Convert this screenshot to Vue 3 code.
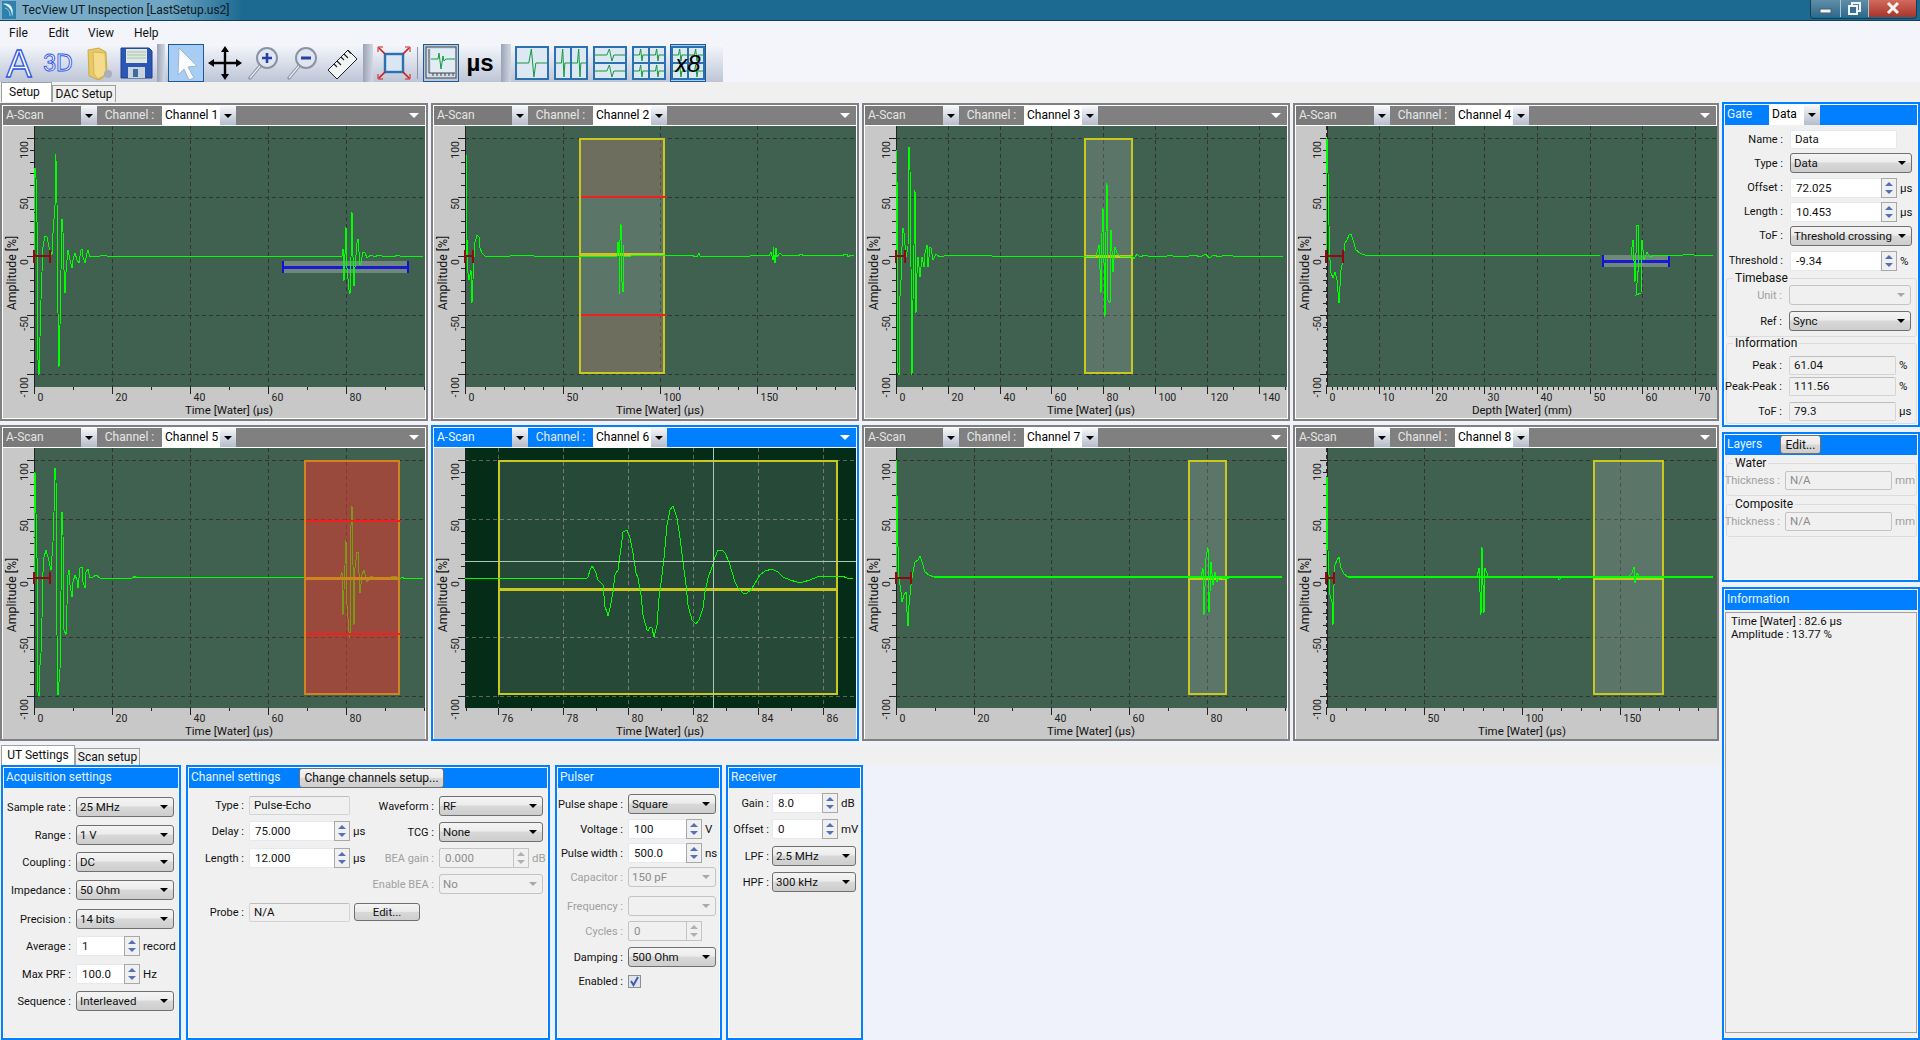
<template>
  <div class="app">
    <!-- Title bar -->
    <div class="titlebar">
      <div class="title-glow">
        <svg class="app-icon" width="14" height="18" viewBox="0 0 14 18">
          <path d="M1 3 C7 1 13 6 10 16 C10 9 7 5 1 3 Z" fill="#eaf6ff" />
          <path d="M3 7 C6 8 8 10 8 15" stroke="#8fd0f5" fill="none" />
        </svg>
        <span>TecView UT Inspection [LastSetup.us2]</span>
      </div>
      <div class="win-buttons">
        <span class="win-btn min"><svg width="29" height="17"><rect x="9" y="9" width="11" height="4" fill="#eef3f7" stroke="#44606f" /></svg></span>
        <span class="win-btn max"><svg width="27" height="17"><rect x="11" y="3" width="8" height="8" fill="none" stroke="#eef3f7" stroke-width="2" /><rect x="8" y="6" width="8" height="8" fill="#3c6f8c" stroke="#eef3f7" stroke-width="2" /></svg></span>
        <span class="win-btn close"><svg width="47" height="17"><path d="M19 3 L29 13 M29 3 L19 13" stroke="#f4f4f4" stroke-width="3" /></svg></span>
      </div>
    </div>

    <!-- Menu -->
    <div class="menubar">
      <span v-for="m in menus" :key="m" class="menu-item">{{ m }}</span>
    </div>

    <!-- Toolbar -->
    <div class="toolbar-row">
      <div class="toolbar">
        <span class="tool"><svg viewBox="0 0 36 38"><text x="18" y="33" text-anchor="middle" class="t-a">A</text></svg></span>
        <span class="tool"><svg viewBox="0 0 36 38"><text x="18" y="27" text-anchor="middle" class="t-3d">3D</text></svg></span>
        <span class="tool">
          <svg viewBox="0 0 36 38">
            <path d="M9 6 L20 4 L27 8 L28 31 L20 36 L10 32 Z" fill="#e8c964" stroke="#b69a3a" stroke-width="0.7" />
            <path d="M14 8 L26 9 L27 30 L19 35 L15 30 Z" fill="#f5dc8a" stroke="#c8a94a" stroke-width="0.7" />
            <ellipse cx="29" cy="30" rx="4" ry="4" fill="#a9afbb" />
          </svg>
        </span>
        <span class="tool">
          <svg viewBox="0 0 36 38">
            <path d="M3 4 H31 L34 7 V34 H3 Z" fill="#2b56b5" stroke="#1c3f8c" />
            <rect x="8" y="5" width="21" height="14" fill="#dfe9e2" />
            <path d="M9 8 H28 M9 11 H28 M9 14 H28" stroke="#a9c3ae" />
            <rect x="10" y="23" width="17" height="11" fill="#c9d4df" />
            <rect x="15" y="25" width="5" height="8" fill="#3e6c9e" />
          </svg>
        </span>
        <span class="tool-sep"></span>
        <span class="tool on">
          <svg viewBox="0 0 36 38">
            <path d="M11 4 L29 22 L20 23 L26 34 L21 36 L16 25 L10 31 Z" fill="#fbfcff" stroke="#9db4cc" />
          </svg>
        </span>
        <span class="tool">
          <svg viewBox="0 0 36 38">
            <path d="M18 5 V33 M4 19 H32" stroke="#000" stroke-width="2.4" />
            <path d="M18 2 L14 8 H22 Z M18 36 L14 30 H22 Z M1 19 L7 15 V23 Z M35 19 L29 15 V23 Z" fill="#000" />
          </svg>
        </span>
        <span class="tool">
          <svg viewBox="0 0 36 38">
            <circle cx="21" cy="14" r="10" fill="#dfe6f2" stroke="#8b93a3" stroke-width="2" />
            <path d="M14 22 L4 34" stroke="#8b93a3" stroke-width="3.4" stroke-linecap="round" />
            <path d="M14 22 L4 34" stroke="#eef0f4" stroke-width="1.2" />
            <path d="M21 9 V19 M16 14 H26" stroke="#2a3fa6" stroke-width="2.6" />
          </svg>
        </span>
        <span class="tool">
          <svg viewBox="0 0 36 38">
            <circle cx="21" cy="14" r="10" fill="#dfe6f2" stroke="#8b93a3" stroke-width="2" />
            <path d="M14 22 L4 34" stroke="#8b93a3" stroke-width="3.4" stroke-linecap="round" />
            <path d="M14 22 L4 34" stroke="#eef0f4" stroke-width="1.2" />
            <path d="M16 14 H26" stroke="#2a3fa6" stroke-width="3" />
          </svg>
        </span>
        <span class="tool">
          <svg viewBox="0 0 36 38">
            <path d="M4 26 L24 6 L33 15 L13 35 Z" fill="#f3f4f4" stroke="#222" />
            <path d="M10 20 L13 23 M13 17 L17 21 M17 13 L20 16 M20 10 L24 14 M24 6.5 L27 9.500" stroke="#222" stroke-width="1.2" />
          </svg>
        </span>
        <span class="tool-sep wide"></span>
        <span class="tool">
          <svg viewBox="0 0 36 38">
            <rect x="9" y="10" width="18" height="18" fill="#dbe6f3" stroke="#2b70b0" stroke-width="2.4" />
            <path d="M9 10 L3 4 M27 10 L33 4 M9 28 L3 34 M27 28 L33 34" stroke="#d01818" stroke-width="1.6" />
            <path d="M2 3 H7 M2 3 V8 M34 3 H29 M34 3 V8 M2 35 H7 M2 35 V30 M34 35 H29 M34 35 V30" stroke="#d01818" />
          </svg>
        </span>
        <span class="tool-line"></span>
        <span class="tool on dim">
          <svg viewBox="0 0 36 38">
            <rect x="3" y="3" width="30" height="31" fill="#cfdcec" stroke="#444" />
            <rect x="8" y="5" width="24" height="24" fill="#e2ecf5" />
            <path d="M8 15 H15 L16 9 L18 25 L20 12 L21 17 L23 15 H32" stroke="#149a3c" fill="none" />
            <path d="M6 5 V29 H32" stroke="#444" fill="none" />
            <path d="M10 29 V32 M14 29 V32 M18 29 V32 M22 29 V32 M26 29 V32 M30 29 V32" stroke="#444" />
          </svg>
        </span>
        <span class="tool"><svg viewBox="0 0 36 38"><text x="18" y="27" text-anchor="middle" class="t-us">µs</text></svg></span>
        <span class="tool-sep wide"></span>
        <span v-for="(lay, i) in layouts" :key="i" class="tool" :class="{ on: lay.x8 }">
          <svg viewBox="0 0 36 38">
            <template v-for="cell in lay.cells" :key="cell.key">
              <rect :x="cell.x" :y="cell.y" :width="cell.w" :height="cell.h" fill="#dce8f3" stroke="#2b70b0" stroke-width="2" />
              <path :d="cell.d" stroke="#149a3c" fill="none" />
            </template>
            <text v-if="lay.x8" x="18" y="28" text-anchor="middle" class="t-x8">x8</text>
          </svg>
        </span>
      </div>
    </div>

    <!-- Top tabs -->
    <div class="tabstrip top-tabs">
      <span class="tab active setup">Setup</span>
      <span class="tab dac">DAC Setup</span>
    </div>

    <div class="work">
      <div class="left">
        <!-- A-Scan views -->
        <div class="scopes">
          <div v-for="s in scopes" :key="s.n" class="scope" :class="{ active: s.active }">
            <div class="scope-head">
              <span class="sc-combo dark"><span class="sc-text">A-Scan</span><span class="sc-arrow"><i class="tri"></i></span></span>
              <span class="sc-label">Channel :</span>
              <span class="sc-combo light"><span class="sc-text">Channel {{ s.n }}</span><span class="sc-arrow"><i class="tri"></i></span></span>
              <i class="menu-tri"></i>
            </div>
            <svg class="chart" :width="422" :height="s.chartH">
              <rect width="422" :height="s.chartH" fill="#c8c8c8" />
              <rect x="31" y="0" width="391" :height="s.plotH" :fill="s.active ? '#042c17' : '#406050'" />

              <g shape-rendering="crispEdges" fill="none">
                <path :d="s.grid" :stroke="s.active ? '#5c665c' : '#333'" stroke-dasharray="4 3" />
                <path :d="s.ticks" stroke="#222" />
              </g>

              <!-- gate under the trace -->
              <g v-if="s.gate && !s.gate.over" shape-rendering="crispEdges" v-html="s.gate.svg"></g>
              <path v-if="s.base" :d="s.base" stroke="#00ff00" stroke-width="2" shape-rendering="crispEdges" />
              <polyline :points="s.points" fill="none" stroke="#00ff00" shape-rendering="crispEdges" />
              <g v-if="s.gate && s.gate.over" shape-rendering="crispEdges" v-html="s.gate.svg"></g>
              <g v-if="s.marker" shape-rendering="crispEdges">
                <path :d="s.marker" stroke="#8a0c0c" stroke-width="2" fill="none" />
              </g>
              <g v-if="s.cross" shape-rendering="crispEdges">
                <path :d="s.cross" stroke="#a9c9b2" fill="none" />
              </g>

              <text v-for="t in s.xLabels" :key="t.text" :x="t.x" :y="s.plotH + 14" class="ax">{{ t.text }}</text>
              <text v-for="t in yLabels" :key="t.text" class="ax" text-anchor="end" :transform="`translate(25 ${t.y}) rotate(-90)`">{{ t.text }}</text>
              <text x="226" :y="s.plotH + 27" text-anchor="middle" class="ax-title">{{ s.xTitle }}</text>
              <text class="ax-title y-title" text-anchor="middle" transform="translate(13 147) rotate(-90)">Amplitude [%]</text>
            </svg>
          </div>
        </div>

        <!-- Settings tabs -->
        <div class="tabstrip ut-tabs">
          <span class="tab active ut">UT Settings</span>
          <span class="tab scan">Scan setup</span>
        </div>

        <div class="bottom">
          <div v-for="p in bottomPanes" :key="p.key" class="pane" :class="p.key">
            <div class="pane-head">
              <span class="pane-title">{{ p.title }}</span>
              <button v-if="p.button" class="btn head-btn">{{ p.button }}</button>
            </div>
            <div class="pane-body cols">
              <div v-for="(sec, i) in p.sections" :key="i" class="section" :class="sec.cls">
                <div v-for="row in sec.rows" :key="row.label" class="row" :class="{ off: row.off }" :style="rowStyle(row)">
                  <span class="lbl">{{ row.label }} :</span>
                  <span v-if="row.type === 'combo'" class="combo"><span class="combo-text">{{ row.value }}</span><i class="tri"></i></span>
                  <span v-else-if="row.type === 'spin'" class="spin"><span class="spin-text">{{ row.value }}</span><span class="spin-btns"><i class="up"></i><i class="down"></i></span></span>
                  <span v-else-if="row.type === 'check'" class="check"><svg width="11" height="11" viewBox="0 0 11 11"><path d="M2 5 L4.500 9 L9 1" stroke="#3d5db0" stroke-width="2" fill="none" /></svg></span>
                  <span v-else class="edit" :class="row.type">{{ row.value }}</span>
                  <span v-if="row.suffix" class="suffix">{{ row.suffix }}</span>
                  <button v-if="row.button" class="btn row-btn">{{ row.button }}</button>
                </div>
              </div>
            </div>
          </div>
        </div>
      </div>

      <div class="right">
        <div v-for="p in sidePanes" :key="p.key" class="pane" :class="p.key">
          <div class="pane-head">
            <span class="pane-title">{{ p.title }}</span>
            <span v-if="p.combo" class="sc-combo light"><span class="sc-text">{{ p.combo }}</span><span class="sc-arrow"><i class="tri"></i></span></span>
            <button v-if="p.button" class="btn head-btn">{{ p.button }}</button>
          </div>
          <div class="pane-body">
            <div v-for="(sec, i) in p.sections" :key="i" class="section" :class="sec.cls">
              <span v-if="sec.legend" class="legend">{{ sec.legend }}</span>
              <div v-for="row in sec.rows" :key="row.label" class="row" :class="{ off: row.off }" :style="rowStyle(row)">
                <span class="lbl">{{ row.label }} :</span>
                <span v-if="row.type === 'combo'" class="combo"><span class="combo-text">{{ row.value }}</span><i class="tri"></i></span>
                <span v-else-if="row.type === 'spin'" class="spin"><span class="spin-text">{{ row.value }}</span><span class="spin-btns"><i class="up"></i><i class="down"></i></span></span>
                <span v-else class="edit" :class="row.type">{{ row.value }}</span>
                <span v-if="row.suffix" class="suffix">{{ row.suffix }}</span>
              </div>
            </div>
          </div>
        </div>

        <div class="pane info">
          <div class="pane-head"><span class="pane-title">Information</span></div>
          <div class="pane-body">
            <div class="info-box">
              <div>Time [Water] : 82.6 µs</div>
              <div>Amplitude : 13.77 %</div>
            </div>
          </div>
        </div>
      </div>
    </div>
  </div>
</template>

<script setup>
const menus = ['File', 'Edit', 'View', 'Help']

// toolbar layout icons
const miniTrace = (x, y, w, h) => {
  const m = y + h / 2
  return `M${x + 1} ${m} H${x + w * 0.4} L${x + w * 0.48} ${y + 2} L${x + w * 0.56} ${y + h - 2} L${x + w * 0.62} ${m} H${x + w - 1}`
}
const makeLayout = (cols, rows, x8 = false) => {
  const cells = []
  const w = 32 / cols
  const h = 32 / rows
  for (let r = 0; r < rows; r++) {
    for (let c = 0; c < cols; c++) {
      const x = 2 + c * w
      const y = 3 + r * h
      cells.push({ key: `${r}-${c}`, x, y, w, h, d: miniTrace(x, y, w, h) })
    }
  }
  return { cells, x8 }
}
const layouts = [makeLayout(1, 1), makeLayout(2, 1), makeLayout(1, 2), makeLayout(2, 2), makeLayout(2, 2, true)]

// form rows
const combo = (label, value, h, extra = {}) => ({ type: 'combo', label, value, h, ...extra })
const spin = (label, value, suffix, h, extra = {}) => ({ type: 'spin', label, value, suffix, h, ...extra })
const edit = (label, value, h, extra = {}) => ({ type: 'edit', label, value, h, ...extra })
const read = (label, value, suffix, h, extra = {}) => ({ type: 'read', label, value, suffix, h, ...extra })
const rowStyle = (row) => ({ height: row.h + 'px', marginTop: (row.top || 0) + 'px' })

const bottomPanes = [
  {
    key: 'acq',
    title: 'Acquisition settings',
    sections: [{
      rows: [
        combo('Sample rate', '25 MHz', 28),
        combo('Range', '1 V', 28),
        combo('Coupling', 'DC', 26),
        combo('Impedance', '50 Ohm', 30),
        combo('Precision', '14 bits', 28),
        spin('Average', '1', 'record', 26),
        spin('Max PRF', '100.0', 'Hz', 30),
        combo('Sequence', 'Interleaved', 24),
      ],
    }],
  },
  {
    key: 'chan',
    title: 'Channel settings',
    button: 'Change channels setup...',
    sections: [
      {
        cls: 'chan-left',
        rows: [
          read('Type', 'Pulse-Echo', '', 24),
          spin('Delay', '75.000', 'µs', 28),
          spin('Length', '12.000', 'µs', 26),
          read('Probe', 'N/A', '', 22, { top: 30, button: 'Edit...' }),
        ],
      },
      {
        cls: 'chan-right',
        rows: [
          combo('Waveform', 'RF', 26),
          combo('TCG', 'None', 26),
          spin('BEA gain', '0.000', 'dB', 26, { off: true }),
          combo('Enable BEA', 'No', 26, { off: true }),
        ],
      },
    ],
  },
  {
    key: 'pulser',
    title: 'Pulser',
    sections: [{
      rows: [
        combo('Pulse shape', 'Square', 22),
        spin('Voltage', '100', 'V', 28),
        spin('Pulse width', '500.0', 'ns', 20),
        combo('Capacitor', '150 pF', 28, { off: true }),
        combo('Frequency', '', 30, { off: true }),
        spin('Cycles', '0', '', 20, { off: true }),
        combo('Damping', '500 Ohm', 32),
        { type: 'check', label: 'Enabled', h: 16 },
      ],
    }],
  },
  {
    key: 'receiver',
    title: 'Receiver',
    sections: [{
      rows: [
        spin('Gain', '8.0', 'dB', 20),
        spin('Offset', '0', 'mV', 32),
        combo('LPF', '2.5 MHz', 22),
        combo('HPF', '300 kHz', 30),
      ],
    }],
  },
]

const sidePanes = [
  {
    key: 'gate',
    title: 'Gate',
    combo: 'Data',
    sections: [
      {
        rows: [
          edit('Name', 'Data', 24),
          combo('Type', 'Data', 24),
          spin('Offset', '72.025', 'µs', 25),
          spin('Length', '10.453', 'µs', 23),
          combo('ToF', 'Threshold crossing', 25),
          spin('Threshold', '-9.34', '%', 25),
        ],
      },
      {
        cls: 'group timebase',
        legend: 'Timebase',
        rows: [
          combo('Unit', '', 32, { off: true, top: 0 }),
          combo('Ref', 'Sync', 20),
        ],
      },
      {
        cls: 'group gate-info',
        legend: 'Information',
        rows: [
          read('Peak', '61.04', '%', 22),
          read('Peak-Peak', '111.56', '%', 20),
          read('ToF', '79.3', 'µs', 26, { top: 2 }),
        ],
      },
    ],
  },
  {
    key: 'layers',
    title: 'Layers',
    button: 'Edit...',
    sections: [
      { cls: 'group', legend: 'Water', rows: [read('Thickness', 'N/A', 'mm', 22, { off: true })] },
      { cls: 'group', legend: 'Composite', rows: [read('Thickness', 'N/A', 'mm', 22, { off: true })] },
    ],
  },
]

// A-Scan plots. Traces are measured off the screenshot crops, so x is in crop
// units (3 or 1.823 per pixel) and y is 3 per pixel.
const parse = (str) => str.trim().split(/\s+/).map((p) => p.split(',').map(Number))

const scopeDefs = [
  {
    n: 1, col: 0, row: 0, kx: 3, cropX: 0,
    x0: 103, step: 234, labels: [0, 20, 40, 60, 80], minor: 2, xTitle: 'Time [Water] (µs)',
    marker: [103, 150, 468, 450, 490],
    blue: { x1: 848, x2: 1225, y: 502, top: 484, bot: 520 },
    trace: `103,470 103,340 105,205 107,235 110,365 112,450 114,780 118,825 120,710 122,600 125,515 128,440 134,408 140,412 148,440 155,465
      160,400 164,315 166,162 169,180 171,310 174,640 177,800 180,675 182,510 185,358 188,395 191,510 195,580 198,515 201,480 205,450 210,480 215,503
      220,480 226,460 232,480 236,488 242,450 246,447 250,470 254,490 260,460 265,450 270,470 280,467 300,468 310,466 320,468 380,468 1025,468 1028,448
      1033,542 1038,380 1041,505 1047,570 1049,582 1052,470 1056,335 1059,470 1063,558 1066,500 1070,430 1074,418 1079,495 1084,490 1090,455 1095,460
      1102,475 1112,465 1125,470 1135,465 1145,468 1165,468 1180,472 1195,466 1205,472 1220,468 1245,468 1268,469`,
  },
  {
    n: 2, col: 1, row: 0, kx: 3, cropX: 430,
    x0: 106, step: 292, labels: [0, 50, 100, 150], minor: 5, xTitle: 'Time [Water] (µs)',
    marker: [106, 130, 468, 450, 488],
    box: { x1: 449, x2: 703, y1: 116, y2: 820, mid: 463, red: [290, 644], stroke: '#c8c820', band: 'rgba(255,255,255,.14)', outer: 'rgba(248,152,136,.25)' },
    trace: `107,468 109,165 110,315 111,420 113,520 116,540 120,525 122,510 125,610 128,540 131,470 134,425 138,418 142,405 146,410 150,445 155,460
      165,468 200,467 235,467 240,469 262,465 263,467 310,465 311,467 380,467 395,469 445,467 560,467 563,425 566,460 568,582 570,420 574,372 576,545
      578,575 580,435 583,470 590,468 597,470 610,466 780,465 800,470 806,460 810,467 960,467 970,464 1018,467 1024,455 1028,480 1030,440 1034,488
      1038,445 1042,470 1050,460 1058,468 1080,464 1100,468 1115,463 1120,467 1180,465 1230,467 1250,463 1255,470 1262,464 1272,467`,
  },
  {
    n: 3, col: 2, row: 0, kx: 1.823, cropX: 860,
    x0: 65, step: 94.7, labels: [0, 20, 40, 60, 80, 100, 120, 140], minor: 2, xTitle: 'Time [Water] (µs)',
    marker: [65, 82, 468, 450, 488],
    box: { x1: 411, x2: 496, y1: 116, y2: 820, mid: 468, stroke: '#c8c820', band: 'rgba(255,255,255,.14)' },
    trace: `65,468 66,150 67,245 68,560 69,820 71,825 72,640 75,540 77,440 79,385 81,400 84,470 87,440 89,140 91,210 93,500 95,825 97,600 100,270 102,640
      104,520 106,470 108,500 110,530 113,470 116,500 119,460 122,435 124,500 127,440 130,445 133,480 138,462 145,470 160,466 180,468 230,466 240,468
      430,468 436,435 439,580 441,400 443,325 446,650 448,395 450,250 452,600 455,610 458,390 461,515 464,440 468,460 475,470 495,468 500,476 505,462
      510,472 520,465 530,470 560,468 565,464 570,468 600,468 610,465 620,470 630,462 637,474 645,464 655,470 665,466 680,468 772,468`,
  },
  {
    n: 4, col: 3, row: 0, kx: 1.823, cropX: 860,
    x0: 850, step: 96, labels: [0, 10, 20, 30, 40, 50, 60, 70], minor: 10, xTitle: 'Depth [Water] (mm)',
    marker: [850, 880, 468, 450, 488],
    blue: { x1: 1355, x2: 1475, y: 484, top: 466, bot: 502 },
    trace: `850,470 851,115 853,220 855,375 857,480 859,520 862,535 866,515 870,540 873,610 876,510 880,480 884,430 888,420 892,405 896,403 900,430 905,450
      912,460 925,468 945,466 1175,464 1180,467 1350,466 1405,466 1409,420 1413,545 1416,375 1419,375 1421,480 1414,585 1423,578 1426,420 1430,480
      1434,455 1440,470 1450,466 1472,468 1480,464 1500,466 1515,462 1525,467 1555,466`,
  },
  {
    n: 5, col: 0, row: 1, kx: 3, cropX: 0,
    x0: 103, step: 234, labels: [0, 20, 40, 60, 80], minor: 2, xTitle: 'Time [Water] (µs)',
    marker: [103, 150, 460, 441, 478],
    box: { x1: 914, x2: 1197, y1: 107, y2: 807, mid: 460, red: [288, 627], stroke: '#d08420', band: 'rgba(255,47,40,.47)', over: true },
    trace: `103,460 103,340 106,140 108,265 110,400 112,790 116,812 118,760 122,685 125,580 128,440 132,395 138,376 145,395 152,435 160,350 163,262 166,130
      169,165 172,630 175,810 179,735 182,500 186,262 189,330 193,615 197,630 200,540 203,450 206,436 210,480 215,515 220,470 226,450 230,465 235,490
      240,430 245,425 250,470 254,490 258,440 264,432 270,458 280,455 288,450 300,458 330,458 395,460 400,457 1020,458 1025,440 1030,570 1037,345
      1040,540 1047,620 1049,638 1052,300 1056,243 1059,420 1063,600 1066,430 1070,380 1075,380 1080,505 1085,450 1092,435 1100,470 1112,452 1125,458
      1165,458 1185,452 1195,458 1200,462 1205,455 1215,462 1228,458 1240,460 1268,458`,
  },
  {
    n: 6, col: 1, row: 1, kx: 3, cropX: 430, active: true,
    x0: 205, step: 195, labels: [76, 78, 80, 82, 84, 86], minor: 2, xTitle: 'Time [Water] (µs)', tickFrom: 107,
    box: { x1: 206, x2: 1222, y1: 107, y2: 807, mid: 493, stroke: '#c8c820', band: 'rgba(255,255,255,.14)' },
    cross: { x: 850, y: 409 },
    trace: `106,458 110,458 175,458 470,458 475,456 480,435 487,424 492,432 497,445 505,465 515,478 520,480 525,545 530,562 535,572 540,550 548,500 555,450
      565,435 572,370 578,320 590,316 600,340 610,385 618,445 625,460 632,510 640,570 650,615 655,618 660,605 665,610 672,637 680,600 688,520 695,450
      703,400 712,300 720,255 730,243 740,280 750,340 760,410 768,480 775,540 785,585 797,598 807,585 818,550 825,500 835,460 845,425 855,395 865,376
      875,376 885,385 897,410 905,440 915,470 925,490 938,505 950,505 962,495 975,475 990,450 1005,437 1025,433 1045,440 1060,455 1080,465 1100,472
      1120,472 1140,465 1160,456 1180,452 1210,452 1235,454 1250,458 1268,463`,
  },
  {
    n: 7, col: 2, row: 1, kx: 1.823, cropX: 860, base: [135, 770, 456],
    x0: 65, step: 142, labels: [0, 20, 40, 60, 80], minor: 2, xTitle: 'Time [Water] (µs)',
    marker: [65, 93, 460, 441, 478],
    box: { x1: 600, x2: 667, y1: 107, y2: 807, mid: 460, stroke: '#c8c820', band: 'rgba(255,255,255,.14)' },
    trace: `65,458 66,105 67,210 69,365 71,460 74,500 77,530 80,510 83,500 85,560 87,602 90,540 93,480 97,440 100,410 105,405 109,393 113,410 118,440 125,450
      135,457 160,460 175,456 600,456 622,456 625,430 628,570 631,400 634,365 636,560 638,500 640,410 643,480 647,440 650,470 655,455 665,462 680,456 770,456`,
  },
  {
    n: 8, col: 3, row: 1, kx: 1.823, cropX: 860, base: [890, 1555, 456],
    x0: 850, step: 178.5, labels: [0, 50, 100, 150], minor: 5, xTitle: 'Time [Water] (µs)',
    marker: [850, 865, 460, 441, 478],
    box: { x1: 1338, x2: 1464, y1: 107, y2: 807, mid: 460, stroke: '#c8c820', band: 'rgba(255,255,255,.14)' },
    trace: `850,458 851,155 852,300 855,450 857,510 860,530 862,600 864,480 866,420 870,405 873,395 877,430 882,448 890,456 905,458 925,456 1125,456 1129,430
      1132,570 1134,365 1136,480 1138,565 1140,430 1144,452 1150,456 1260,456 1270,452 1275,465 1280,456 1400,456 1408,445 1411,425 1413,475 1416,445
      1420,452 1430,455 1555,456`,
  },
]

const yLabels = [
  { text: '100', y: 15 },
  { text: '50', y: 72 },
  { text: '0', y: 133 },
  { text: '-50', y: 190 },
  { text: '-100', y: 251 },
]

const buildScope = (def) => {
  const bodyX = def.col * 431 + 3
  const cropY = def.row ? -23 : -26
  const px = (zx) => Math.round(zx / def.kx + def.cropX - bodyX)
  const py = (zy) => Math.round(zy / 3 + cropY)
  const plotH = def.row ? 260 : 261
  const chartH = def.row ? 291 : 292

  // horizontal grid + y ticks
  let grid = ''
  let ticks = ''
  for (let pct = -100; pct <= 100; pct += 10) {
    const y = Math.round(130 - pct * 1.18) + 0.5
    const major = pct % 50 === 0
    ticks += `M${major ? 24 : 27} ${y} H31 `
    if (major && pct !== 0) grid += `M31 ${y} H420 `
  }

  // vertical grid + x ticks
  const minorStep = def.step / def.minor
  const xLabels = []
  def.labels.forEach((text, i) => {
    const x = px(def.x0 + i * def.step) + 0.5
    grid += `M${x} 0 V${plotH} `
    ticks += `M${x} ${plotH} V${plotH + 7} `
    xLabels.push({ text: String(text), x: x + 3 })
  })
  const start = def.tickFrom ?? def.x0
  for (let zx = start; px(zx) <= 421; zx += minorStep) {
    const x = px(zx) + 0.5
    ticks += `M${x} ${plotH} V${plotH + 3} `
  }
  ticks += `M31 0 V${plotH} `

  const scope = {
    n: def.n,
    active: def.active,
    chartH,
    plotH,
    xTitle: def.xTitle,
    grid,
    ticks,
    xLabels,
    points: parse(def.trace).map(([x, y]) => `${px(x)},${py(y)}`).join(' '),
  }

  if (def.base) {
    const [x1, x2, y] = def.base
    scope.base = `M${px(x1)} ${py(y)} H${px(x2)}`
  }

  if (def.marker) {
    const [x1, x2, y, top, bot] = def.marker
    scope.marker = `M${px(x1)} ${py(y)} H${px(x2)} M${px(x1)} ${py(top)} V${py(bot)} M${px(x2)} ${py(top)} V${py(bot)}`
  }

  if (def.cross) {
    scope.cross = `M${px(def.cross.x) + 0.5} 0 V${plotH} M31 ${py(def.cross.y) + 0.5} H422`
  }

  if (def.blue) {
    const b = def.blue
    const x1 = px(b.x1)
    const x2 = px(b.x2)
    scope.gate = {
      svg: `<rect x="${x1}" y="${py(b.top)}" width="${x2 - x1}" height="${py(b.bot) - py(b.top)}" fill="rgba(255,255,255,.25)"/>
        <path d="M${x1} ${py(b.y)} H${x2}" stroke="#1a1ad0" stroke-width="3"/>
        <path d="M${x1} ${py(b.top)} V${py(b.bot)} M${x2} ${py(b.top)} V${py(b.bot)}" stroke="#1010d8" stroke-width="2"/>`,
    }
  }

  if (def.box) {
    const b = def.box
    const x1 = px(b.x1)
    const x2 = px(b.x2)
    const y1 = py(b.y1)
    const y2 = py(b.y2)
    let svg = `<rect x="${x1}" y="${y1}" width="${x2 - x1}" height="${y2 - y1}" fill="${b.band}"/>`
    if (b.outer) {
      const [r1, r2] = b.red.map(py)
      svg = `<rect x="${x1}" y="${y1}" width="${x2 - x1}" height="${r1 - y1}" fill="${b.outer}"/>
        <rect x="${x1}" y="${r2}" width="${x2 - x1}" height="${y2 - r2}" fill="${b.outer}"/>
        <rect x="${x1}" y="${r1}" width="${x2 - x1}" height="${r2 - r1}" fill="${b.band}"/>`
    }
    svg += `<rect x="${x1}" y="${y1}" width="${x2 - x1}" height="${y2 - y1}" fill="none" stroke="${b.stroke}" stroke-width="2"/>`
    svg += `<path d="M${x1} ${py(b.mid)} H${x2}" stroke="${b.stroke}" stroke-width="3"/>`
    if (b.red) {
      b.red.forEach((r) => {
        svg += `<path d="M${x1 + 1} ${py(r)} H${x2 + 2}" stroke="#f02020" stroke-width="2"/>`
      })
    }
    scope.gate = { svg, over: b.over }
  }
  return scope
}

const scopes = scopeDefs.map(buildScope)
</script>

<style>
html,
body {
  margin: 0;
  background: #f0f0f0;
}
</style>

<style scoped>
.app {
  width: 1920px;
  height: 1040px;
  overflow: hidden;
  display: flex;
  flex-direction: column;
  font-family: Roboto, "Liberation Sans", sans-serif;
  font-size: 11px;
  color: #111;
  background: #eff2fb;
}

/* title bar */
.titlebar {
  height: 20px;
  flex: none;
  display: flex;
  justify-content: space-between;
  background: #1c6a92;
  border-bottom: 1px solid #0f3f5a;
}
.title-glow {
  width: 240px;
  display: flex;
  align-items: center;
  gap: 6px;
  padding-left: 2px;
  font-size: 12px;
  color: #0c1a22;
  background: linear-gradient(90deg, #7fb0cc 0, #6fa6c4 70%, #1c6a92 100%);
}
.app-icon {
  flex: none;
  background: #2e80ad;
}
.win-buttons {
  display: flex;
  margin-right: 3px;
  height: 18px;
  border: 1px solid #153f57;
  border-top: none;
  border-radius: 0 0 4px 4px;
  overflow: hidden;
}
.win-btn {
  display: block;
  height: 17px;
  line-height: 0;
}
.win-btn.min,
.win-btn.max {
  background: linear-gradient(#5f8ea8, #2f6a8a);
  border-right: 1px solid #a9c4d4;
}
.win-btn.close {
  background: linear-gradient(#d26a5e, #a8342a);
}

/* menu */
.menubar {
  height: 23px;
  flex: none;
  display: flex;
  align-items: center;
  background: #f3f5fb;
  font-size: 12px;
  padding-left: 9px;
}
.menu-item {
  width: 39.5px;
}
.menu-item:nth-child(3) {
  width: 46px;
}

/* toolbar */
.toolbar-row {
  height: 38px;
  flex: none;
  background: #f3f5fb;
}
.toolbar {
  width: 723px;
  height: 38px;
  display: flex;
  align-items: stretch;
  gap: 3px;
  padding-left: 1px;
  box-sizing: border-box;
  background: linear-gradient(#f5f7fc, #bdc5d6);
}
.tool {
  width: 36px;
  flex: none;
  box-sizing: border-box;
  line-height: 0;
}
.tool svg {
  width: 36px;
  height: 38px;
  overflow: visible;
}
.tool.on {
  background: #a8cdf5;
  outline: 1px solid #1d5a96;
  outline-offset: -1px;
}
.tool.on.dim {
  background: #b8c8dc;
}
.tool-sep {
  width: 8px;
  flex: none;
  background: linear-gradient(90deg, #9aa3b5, #d3d8e3);
}
.tool-sep.wide {
  width: 10px;
}
.tool-line {
  width: 1px;
  flex: none;
  margin: 3px 2px;
  background: #8d95a6;
}
.t-a {
  font: 38px "Liberation Sans", sans-serif;
  fill: #fff;
  stroke: #2c56e0;
  stroke-width: 1.3;
}
.t-3d {
  font: 23px "Liberation Sans", sans-serif;
  fill: #fff;
  stroke: #2c56e0;
  stroke-width: 0.9;
}
.t-us {
  font: bold 24px "Liberation Sans", sans-serif;
  fill: #000;
}
.t-x8 {
  font: italic 24px "Liberation Sans", sans-serif;
  fill: #000;
}

/* tabs */
.tabstrip {
  height: 20px;
  flex: none;
  display: flex;
  align-items: flex-end;
  background: #f0f0f0;
  padding-left: 1px;
}
.tab {
  box-sizing: border-box;
  border: 1px solid #a0a0a0;
  border-bottom: none;
  background: #f0f0f0;
  font-size: 12px;
  text-align: center;
  height: 17px;
  line-height: 16px;
}
.tab.active {
  background: #fff;
  height: 20px;
  line-height: 18px;
}
.tab.setup {
  width: 51px;
  text-align: left;
  padding-left: 7px;
}
.tab.dac {
  width: 64px;
}
.tab.ut {
  width: 74px;
}
.tab.scan {
  width: 65px;
}

/* main area */
.work {
  flex: 1;
  display: flex;
  min-height: 0;
}
.left {
  width: 1722px;
  flex: none;
  display: flex;
  flex-direction: column;
  padding-top: 1px;
}
.right {
  width: 198px;
  flex: none;
  display: flex;
  flex-direction: column;
  gap: 5px;
}
.scopes {
  display: grid;
  grid-template-columns: 428px 428px 428px 426px;
  grid-template-rows: 318px 316px;
  column-gap: 3px;
  row-gap: 4px;
  margin-bottom: 4px;
}

/* A-Scan view */
.scope {
  box-sizing: border-box;
  border: 2px solid #808080;
  background: #fff;
  padding: 1px;
  display: flex;
  flex-direction: column;
  overflow: hidden;
}
.scope.active {
  border-color: #0080ff;
}
.scope-head {
  height: 19px;
  flex: none;
  display: flex;
  align-items: stretch;
  background: #808080;
  margin-bottom: 1px;
}
.scope.active .scope-head {
  background: #0080ff;
}
.sc-combo {
  display: flex;
  flex: none;
}
.sc-text {
  display: block;
  line-height: 18px;
  font-size: 12px;
  padding-left: 3px;
  box-sizing: border-box;
}
.sc-arrow {
  width: 16px;
  display: flex;
  align-items: center;
  justify-content: center;
  background: linear-gradient(#f6f7fa, #b4bccb);
}
.sc-combo.dark .sc-text {
  width: 78px;
  color: #e4e4e4;
  background: #7a7a7a;
}
.scope.active .sc-combo.dark .sc-text {
  background: #0080ff;
  color: #f0f6ff;
}
.sc-combo.light .sc-text {
  width: 58px;
  background: #fff;
  color: #000;
}
.gate .sc-combo.light .sc-text {
  width: 35px;
}
.sc-label {
  width: 65px;
  flex: none;
  color: #e8e8e8;
  font-size: 12px;
  line-height: 18px;
  text-align: center;
}
.tri {
  display: block;
  width: 0;
  height: 0;
  border-left: 4px solid transparent;
  border-right: 4px solid transparent;
  border-top: 4px solid #000;
}
.menu-tri {
  display: block;
  margin: 7px 6px 0 auto;
  width: 0;
  height: 0;
  border-left: 5px solid transparent;
  border-right: 5px solid transparent;
  border-top: 5px solid #fff;
}
.chart {
  display: block;
  flex: none;
}
.ax {
  font-size: 10.5px;
  fill: #222;
}
.ax-title {
  font-size: 11.5px;
  fill: #111;
}
.y-title {
  font-size: 12.3px;
}

/* panes */
.bottom {
  flex: 1;
  display: flex;
  min-height: 0;
  gap: 5px;
  padding-left: 1px;
}
.pane {
  box-sizing: border-box;
  border: 2px solid #0080ff;
  background: #fff;
  padding: 1px;
  display: flex;
  flex-direction: column;
  flex: none;
}
.pane-head {
  height: 20px;
  flex: none;
  display: flex;
  align-items: stretch;
  background: #0080ff;
  color: #e8f3ff;
  font-size: 12px;
}
.pane-title {
  display: block;
  line-height: 19px;
  padding-left: 2px;
  box-sizing: border-box;
  flex: none;
}
.pane-body {
  flex: 1;
  min-height: 0;
  background: #f0f0f0;
  padding-top: 5px;
}
.cols {
  display: flex;
}
.acq {
  width: 180px;
}
.chan {
  width: 364px;
}
.pulser {
  width: 167px;
}
.receiver {
  width: 137px;
  margin-left: -1px;
}
.chan .pane-title {
  width: 110px;
}
.gate {
  height: 325px;
}
.layers {
  height: 150px;
}
.info {
  flex: 1;
}
.gate .pane-title {
  width: 44px;
}
.gate .pane-body {
  padding-top: 2px;
}
.layers .pane-title {
  width: 55px;
}
.layers .pane-body {
  padding-top: 8px;
}

/* form rows */
.section {
  --lbl: 60px;
  --gap: 5px;
  --field: 64px;
  --combo: 98px;
}
.acq .section {
  --lbl: 67px;
}
.chan-left {
  --lbl: 55px;
  --field: 101px;
  width: 181px;
  flex: none;
}
.chan-right {
  --lbl: 64px;
  --field: 90px;
  --combo: 104px;
  flex: none;
}
.pulser .section {
  --lbl: 65px;
  --field: 74px;
  --combo: 88px;
}
.receiver .section {
  --lbl: 40px;
  --gap: 3px;
  --field: 66px;
  --combo: 84px;
}
.gate .section {
  --lbl: 58px;
  --gap: 7px;
  --field: 107px;
  --combo: 122px;
}
.layers .section {
  --lbl: 53px;
  --gap: 5px;
  --field: 107px;
}
.group {
  position: relative;
  box-sizing: border-box;
  border: 1px solid #dcdcdc;
  border-radius: 3px;
  margin: 5px 0 0 1px;
  width: 191px;
}
.gate .group {
  --lbl: 55px;
}
.timebase {
  padding-bottom: 5px;
}
.gate-info {
  margin-top: 6px;
  padding-top: 10px;
  height: 81px;
}
.layers .group {
  padding: 5px 0 4px;
  margin: 0 0 8px 1px;
}
.legend {
  position: absolute;
  left: 6px;
  top: -7px;
  background: #f0f0f0;
  padding: 0 2px;
  font-size: 12px;
  line-height: 13px;
}
.row {
  display: flex;
  align-items: center;
  box-sizing: border-box;
  white-space: nowrap;
}
.lbl {
  width: var(--lbl);
  margin-right: var(--gap);
  flex: none;
  font-size: 11px;
  display: flex;
  justify-content: flex-end;
}
.combo {
  width: var(--combo);
  height: 20px;
  flex: none;
  box-sizing: border-box;
  display: flex;
  align-items: center;
  justify-content: space-between;
  padding: 0 5px 0 3px;
  border: 1px solid #707070;
  border-radius: 3px;
  background: linear-gradient(#f4f4f4 0, #ececec 45%, #d8d8d8 50%, #cdcdcd 100%);
  font-size: 11.5px;
}
.edit {
  width: var(--field);
  height: 19px;
  flex: none;
  box-sizing: border-box;
  padding-left: 4px;
  line-height: 17px;
  border: 1px solid #e3e9ef;
  border-radius: 2px;
  background: #fff;
  font-size: 11.5px;
}
.edit.read {
  background: #f0f0f0;
  border-color: #d4d4d4;
  border-top-color: #bdbdbd;
}
.spin {
  width: var(--field);
  height: 20px;
  flex: none;
  box-sizing: border-box;
  display: flex;
  background: #fff;
  border: 1px solid #e3e9ef;
  border-radius: 2px;
  font-size: 11.5px;
}
.spin-text {
  flex: 1;
  padding-left: 5px;
  line-height: 18px;
}
.spin-btns {
  width: 16px;
  flex: none;
  margin: -1px -1px -1px 0;
  box-sizing: border-box;
  border: 1px solid #a8a8a8;
  background: #f0f0f0;
  display: flex;
  flex-direction: column;
  align-items: center;
  justify-content: space-between;
  padding: 3px 0;
}
.up,
.down {
  display: block;
  width: 0;
  height: 0;
  border-left: 4px solid transparent;
  border-right: 4px solid transparent;
}
.up {
  border-bottom: 4px solid #5670b8;
}
.down {
  border-top: 4px solid #5670b8;
}
.check {
  width: 13px;
  height: 13px;
  flex: none;
  box-sizing: border-box;
  border: 1px solid #8e8f8f;
  background: #dfe3ea;
  line-height: 0;
}
.suffix {
  margin-left: 3px;
  flex: none;
  font-size: 11.5px;
}
.off .lbl,
.off .suffix {
  color: #a0a0a0;
}
.off .combo,
.off .edit,
.off .spin {
  background: #f0f0f0;
  border-color: #c4c4c4;
  color: #8c8c8c;
}
.off .tri {
  border-top-color: #a8a8a8;
}
.off .up {
  border-bottom-color: #b0b0b0;
}
.off .down {
  border-top-color: #b0b0b0;
}
.off .spin-btns {
  border-color: #c4c4c4;
}
.btn {
  box-sizing: border-box;
  padding: 0;
  border: 1px solid #707070;
  border-radius: 3px;
  background: linear-gradient(#f4f4f4, #eaeaea 48%, #d8d8d8 52%, #cfcfcf);
  font: 12px Roboto, "Liberation Sans", sans-serif;
  color: #111;
}
.head-btn {
  height: 20px;
  width: 145px;
}
.layers .head-btn {
  width: 41px;
  height: 19px;
}
.row-btn {
  width: 66px;
  height: 18px;
  flex: none;
  margin-left: 4px;
  font-size: 11.5px;
}

/* status box */
.info .pane-body {
  padding: 2px 0 4px;
  display: flex;
}
.info-box {
  flex: 1;
  box-sizing: border-box;
  border: 1px solid #a0a0a0;
  padding: 2px 5px;
  font-size: 11.5px;
  line-height: 13px;
}
</style>
